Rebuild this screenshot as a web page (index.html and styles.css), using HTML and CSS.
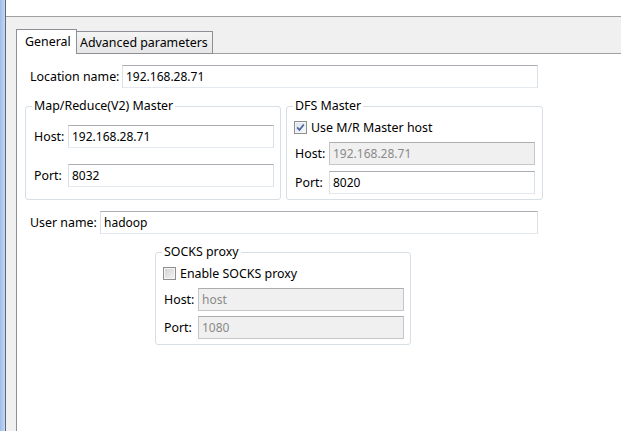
FILE: index.html
```html
<!DOCTYPE html>
<html lang="en">
<head>
  <meta charset="UTF-8">
  <title>Hadoop location</title>
  <link rel="stylesheet" href="styles.css">
</head>
<body>
  <div class="window">
    <div class="side"></div>
    <div class="main">
      <div class="banner"></div>
      <div class="area">
        <div class="tabs">
          <div class="tab active">General</div>
          <div class="tab advanced">Advanced parameters</div>
          <div class="tab-fill"></div>
        </div>
        <div class="panel">
          <div class="form">
            <div class="row">
              <label class="lbl-location">Location name:</label>
              <input class="text" value="192.168.28.71">
            </div>

            <div class="groups">
              <fieldset class="group mr">
                <legend>Map/Reduce(V2) Master</legend>
                <div class="field host">
                  <label>Host:</label>
                  <input class="text" value="192.168.28.71">
                </div>
                <div class="field port">
                  <label>Port:</label>
                  <input class="text" value="8032">
                </div>
              </fieldset>

              <fieldset class="group dfs">
                <legend>DFS Master</legend>
                <div class="check">
                  <span class="box checked">
                    <svg width="9" height="9" viewBox="0 0 9 9"><path d="M1.2 4.4 L3.5 7 L7.8 1.4" fill="none" stroke="#4a6294" stroke-width="1.7"/></svg>
                  </span>
                  Use M/R Master host
                </div>
                <div class="field">
                  <label>Host:</label>
                  <input class="text" value="192.168.28.71" disabled>
                </div>
                <div class="field">
                  <label>Port:</label>
                  <input class="text" value="8020">
                </div>
              </fieldset>
            </div>

            <div class="row user">
              <label class="lbl-user">User name:</label>
              <input class="text" value="hadoop">
            </div>

            <fieldset class="group socks">
              <legend>SOCKS proxy</legend>
              <div class="check">
                <span class="box"></span>
                Enable SOCKS proxy
              </div>
              <div class="field">
                <label>Host:</label>
                <input class="text" value="host" disabled>
              </div>
              <div class="field tight">
                <label>Port:</label>
                <input class="text" value="1080" disabled>
              </div>
            </fieldset>
          </div>
        </div>
      </div>
    </div>
  </div>
</body>
</html>
```

FILE: styles.css
```css
* {
  box-sizing: border-box;
  margin: 0;
  padding: 0;
}

body {
  font-family: "Noto Sans", sans-serif;
  font-size: 12.4px;
  color: #000;
  background-color: #fff;
}

.window {
  display: flex;
  width: 621px;
  height: 431px;
  overflow: hidden;
}

.side {
  width: 6px;
  background: linear-gradient(to right, #9dbde8, #c4d9f3);
  border-right: 1px solid #5e6874;
}

.main {
  flex: 1;
  display: flex;
  flex-direction: column;
}

.banner {
  height: 17px;
  background-color: #fff;
  border-bottom: 1px solid #a0a0a0;
}

.area {
  flex: 1;
  display: flex;
  flex-direction: column;
  background-color: #f0f0f0;
  padding-left: 10px;
}

/* tab strip */
.tabs {
  display: flex;
  align-items: flex-end;
  height: 37px;
}

.tab {
  height: 23px;
  padding: 0 3px;
  line-height: 21px;
  white-space: nowrap;
  border: 1px solid #8c8f96;
  border-left: none;
  background: linear-gradient(#f4f4f4, #e6e6e6);
}

.tab.advanced {
  width: 136px;
}

.tab.active {
  height: 25px;
  width: 61px;
  padding-left: 8px;
  line-height: 23px;
  border-left: 1px solid #8c8f96;
  border-bottom: none;
  background: #fff;
}

.tab-fill {
  flex: 1;
  border-bottom: 1px solid #a0a0a0;
}

.panel {
  flex: 1;
  background-color: #fff;
  border-left: 1px solid #8c8f96;
}

.form {
  width: 526px;
  padding: 11px 0 0 8px;
}

.row {
  display: flex;
  align-items: center;
  padding: 0 5px;
}

.row label {
  line-height: 16px;
}

.lbl-location {
  width: 92px;
}

.lbl-user {
  width: 70px;
}

.text {
  flex: 1;
  min-width: 0;
  height: 23px;
  padding: 0 3px;
  font-family: inherit;
  font-size: 12px;
  color: #000;
  background-color: #fff;
  border: 1px solid #dbdfe6;
  border-top-color: #abadb3;
  border-bottom-color: #e3e9ef;
  outline: none;
}

.text:disabled {
  color: #8a8a8a;
  background-color: #f0f0f0;
  border-color: #c6c6c6;
  border-top-color: #adadad;
}

/* group boxes */
.groups {
  display: grid;
  grid-template-columns: 256px 257px;
  gap: 5px;
  margin-top: 10px;
}

.group {
  border: 1px solid #d5dfe5;
  border-radius: 3px;
  padding: 5px 6px 5px 8px;
}

.group legend {
  line-height: 16px;
  padding: 0 2px;
  margin-left: -2px;
}

.field {
  display: flex;
  align-items: center;
  margin-top: 6px;
}

.field label {
  width: 34px;
}

.mr .port {
  margin-top: 16px;
}

.dfs {
  padding-right: 7px;
}

.check {
  display: flex;
  align-items: center;
  height: 17px;
  gap: 4px;
  margin-left: -1px;
}

.box {
  display: flex;
  align-items: center;
  justify-content: center;
  width: 13px;
  height: 13px;
  border: 1px solid #8e8f8f;
  background: linear-gradient(135deg, #cfd0d2, #f6f6f6);
  box-shadow: inset 0 0 0 1px #f4f4f4;
}

.box.checked {
  background: linear-gradient(135deg, #d9e3f1, #f7f9fc);
}

.user {
  margin-top: 11px;
}

.socks {
  width: 256px;
  margin: 10px 0 0 130px;
}

.socks .tight {
  margin-top: 5px;
}
```
